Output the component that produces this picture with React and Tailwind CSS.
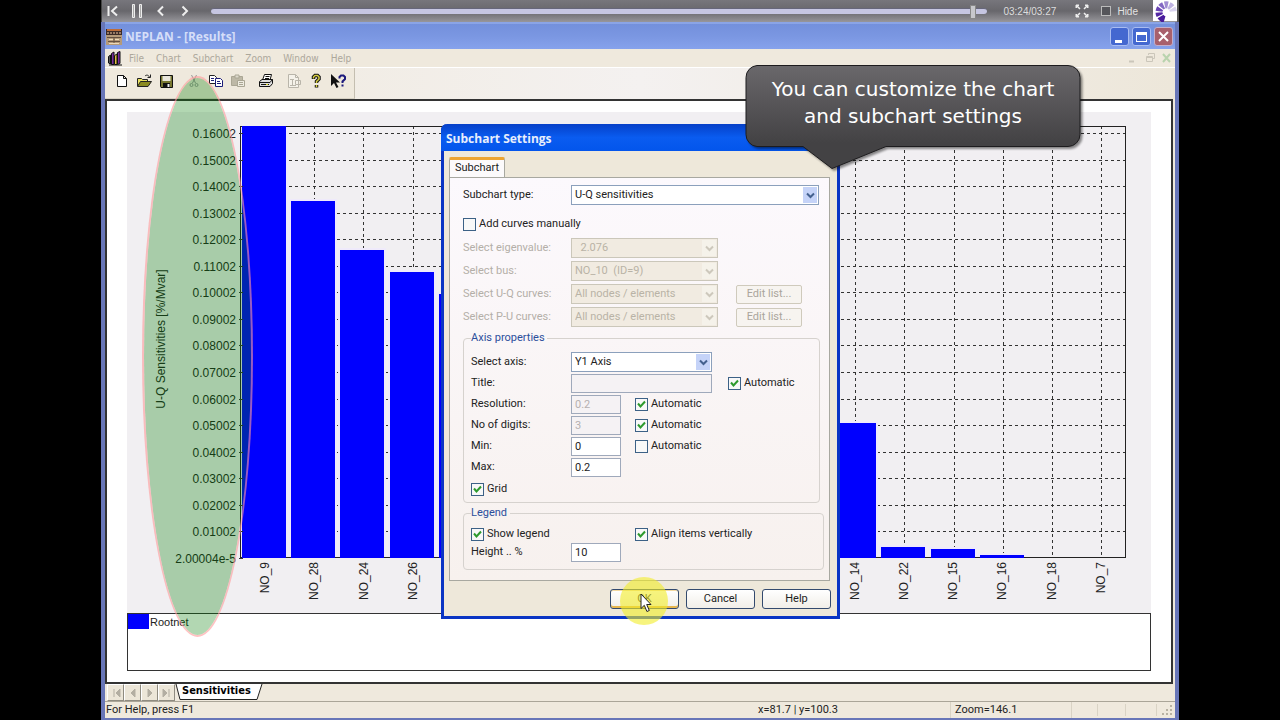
import clsx from 'clsx'

const bars = [
    { left: 115, top: 14 },
    { left: 164, top: 89 },
    { left: 213, top: 138 },
    { left: 263, top: 160 },
    { left: 312, top: 182 },
    { left: 705, top: 311 },
    { left: 754, top: 435 },
    { left: 804, top: 437 },
    { left: 853, top: 443 },
]

const categories = [
    ['NO_9', 138],
    ['NO_28', 187],
    ['NO_24', 237],
    ['NO_26', 286],
    ['NO_14', 728],
    ['NO_22', 777],
    ['NO_15', 826],
    ['NO_16', 875],
    ['NO_18', 925],
    ['NO_7', 974],
]

const yLabels = [
    '0.16002', '0.15002', '0.14002', '0.13002', '0.12002', '0.11002', '0.10002', '0.09002', '0.08002',
    '0.07002', '0.06002', '0.05002', '0.04002', '0.03002', '0.02002', '0.01002', '2.00004e-5',
]

const yPos = (i) => Math.round(21 + i * 26.55) + 0.5
const xPos = (i) => Math.round(138 + i * 49.18) + 0.5

function Chart() {
    return (
        <svg viewBox="0 0 1024 501" className="block w-full bg-[#f1eff2]" fontFamily="Liberation Sans, sans-serif" fontSize="12" fill="#222">
            {yLabels.slice(0, -1).map((label, i) => (
                <line key={label} x1="114" x2="999" y1={yPos(i)} y2={yPos(i)} stroke="#333" strokeDasharray="3 3" />
            ))}
            {Array.from({ length: 18 }, (_, i) => (
                <line key={i} x1={xPos(i)} x2={xPos(i)} y1="14" y2="446" stroke="#333" strokeDasharray="3 3" />
            ))}
            <rect x="113.5" y="14.5" width="885" height="431" fill="none" stroke="#222" />
            {bars.map((bar) => (
                <g key={bar.left}>
                    <rect x={bar.left - 2} y={Math.max(bar.top - 2, 15)} width="48" height={445 - Math.max(bar.top - 2, 15)} fill="#efeafb" />
                    <rect x={bar.left} y={bar.top} width="44" height={446 - bar.top} fill="#0000fe" />
                </g>
            ))}
            <path d="M113.500 14v432" stroke="#222" />
            {yLabels.map((label, i) => (
                <g key={label}>
                    <line x1="112" x2="116" y1={yPos(i)} y2={yPos(i)} stroke="#333" />
                    <text x="109" y={yPos(i) + 4} textAnchor="end">{label}</text>
                </g>
            ))}
            {categories.map(([label, x]) => (
                <text key={label} transform={`translate(${x + 4} 450) rotate(-90)`} textAnchor="end">{label}</text>
            ))}
            <text transform="translate(38 227) rotate(-90)" textAnchor="middle">U-Q Sensitivities [%/Mvar]</text>
        </svg>
    )
}

function PlayerBar() {
    return (
        <div className="flex h-[22px] items-center border-l border-[#444] bg-linear-to-b from-[#77767c] via-[#68676c] to-[#97969b] text-white">
            <div className="flex items-center gap-2 pl-[3px]">
                <button aria-label="Restart" className="flex w-4 justify-center">
                    <svg width="12" height="12" viewBox="0 0 12 12" fill="none" stroke="#eee" strokeWidth="2"><path d="M1.500 1v10M10 1.500 5 6l5 4.500" /></svg>
                </button>
                <button aria-label="Pause" className="flex w-4 justify-center">
                    <svg width="12" height="14" viewBox="0 0 12 14" fill="#aaa" stroke="#eee"><path d="M1.500.500h2v13h-2zM8.500.500h2v13h-2z" /></svg>
                </button>
                <button aria-label="Back" className="flex w-4 justify-center">
                    <svg width="10" height="12" viewBox="0 0 10 12" fill="none" stroke="#eee" strokeWidth="2"><path d="M7 1.500 2.500 6 7 10.500" /></svg>
                </button>
                <button aria-label="Forward" className="flex w-4 justify-center">
                    <svg width="10" height="12" viewBox="0 0 10 12" fill="none" stroke="#eee" strokeWidth="2"><path d="M2.500 1.500 7 6 2.500 10.500" /></svg>
                </button>
            </div>
            <input
                type="range"
                aria-label="Position"
                min="0"
                max="207"
                defaultValue="204"
                className="ml-[18px] h-[6px] min-w-0 flex-1 appearance-none rounded-full border-t border-[#66667a] bg-[#c6c6e2] [&::-webkit-slider-thumb]:h-[14px] [&::-webkit-slider-thumb]:w-[6px] [&::-webkit-slider-thumb]:appearance-none [&::-webkit-slider-thumb]:border [&::-webkit-slider-thumb]:border-[#888] [&::-webkit-slider-thumb]:bg-[#c8c8cc]"
            />
            <span className="ml-4 w-[54px] text-[10px] whitespace-nowrap text-[#ddd]">03:24/03:27</span>
            <button aria-label="Full screen" className="ml-[18px]">
                <svg width="14" height="14" viewBox="0 0 14 14" fill="#eee" stroke="#eee">
                    <path d="M1 1h3L1 4zM13 1v3l-3-3zM1 13v-3l3 3zM13 13h-3l3-3z" />
                    <path d="m2 2 3 3M12 2 9 5M2 12l3-3M12 12 9 9" fill="none" strokeWidth="1.500" />
                </svg>
            </button>
            <label className="ml-3 flex items-center gap-[6px] text-[10px] text-[#e4e4e4]">
                <input type="checkbox" className="size-[10px] appearance-none border border-[#bbb] bg-[#55555a]" />
                Hide
            </label>
            <svg className="ml-[15px]" width="24" height="22" viewBox="0 0 24 22">
                <path d="M0 0h24v21H0z" fill="#fff" />
                <g fill="none" strokeWidth="7">
                    <path d="M11.500 19.500A7 7 0 0 1 7.500 16.500" stroke="#4a1c9c" />
                    <path d="M6.800 15.500a7.500 7.500 0 0 1-.8-3" stroke="#5428a4" />
                    <path d="M6 11.300a7.500 7.500 0 0 1 1.200-3" stroke="#6a44b4" />
                    <path d="M8 7.300a7.500 7.500 0 0 1 2.600-2" stroke="#8468c4" />
                    <path d="M11.700 5a7.500 7.500 0 0 1 3.200 0" stroke="#a08cd2" />
                    <path d="M16 5.400a7.500 7.500 0 0 1 2.600 2" stroke="#beb2e2" />
                    <path d="M19.300 8.400a7.500 7.500 0 0 1 1 3" stroke="#d9d3ee" />
                </g>
            </svg>
            <div className="h-full w-[2px] bg-[#555]" />
        </div>
    )
}

function TitleBar() {
    return (
        <header className="flex h-[27px] items-center border-t-2 border-[#8aa4e6] bg-linear-to-b from-[#7390dc] via-[#7b97e2] to-[#86a2ec] pr-[2px] pl-[1px]">
            <svg width="16" height="16" viewBox="0 0 16 16">
                <path d="M0 0h16v16H0z" fill="#b59a7a" />
                <path d="M0 0h16v6H0z" fill="#3c2a26" />
                <path d="M1 1h14" stroke="#e88440" strokeWidth="1.500" />
                <path d="M1 4h2m1 0h2m1 0h2m1 0h2m1 0h2" stroke="#f0c8a0" />
                <path d="M1 8.500h14M2 12.500h12M8 8v7" stroke="#645040" />
                <path d="M3 10.500h4M9 10.500h4M3 14.500h10" stroke="#ecd9b8" />
            </svg>
            <h1 className="ml-[3px] flex-1 font-['Open_Sans',sans-serif] text-[12px] font-bold text-[#d5def8]">NEPLAN - [Results]</h1>
            <div className="flex gap-[3px]">
                <button aria-label="Minimize" className="flex size-[19px] rounded-[3px] border border-[#a9bdf2] bg-[#4468d0] pt-3 pl-1">
                    <span className="h-[3px] w-[7px] bg-white" />
                </button>
                <button aria-label="Maximize" className="flex size-[19px] items-center justify-center rounded-[3px] border border-[#a9bdf2] bg-[#4468d0]">
                    <span className="h-[10px] w-[11px] border border-t-[3px] border-white" />
                </button>
                <button aria-label="Close" className="flex size-[19px] items-center justify-center rounded-[3px] border border-[#c3aecb] bg-[#a8606c]">
                    <svg width="11" height="11" viewBox="0 0 11 11" stroke="#fff" strokeWidth="2"><path d="m1 1 9 9M10 1 1 10" /></svg>
                </button>
            </div>
        </header>
    )
}

function MenuBar() {
    return (
        <nav className="flex h-[18px] items-center pl-[2px] text-[10px] text-[#aca79b]">
            <svg width="16" height="16" viewBox="0 0 16 16" stroke="#111">
                <path d="M1.500 6.500 3.500 5v9l-2-1z" fill="#555" />
                <path d="M4.500 3.500 7 2v12.500H4.500z" fill="#7a2ea0" />
                <path d="M7.500 5.500 10 4v10.500H7.500z" fill="#e0c040" />
                <path d="M10.500 2.500 13 1.500v12l-2.500 1z" fill="#7a2ea0" />
                <path d="M2 15h13" />
            </svg>
            <div className="ml-[6px] flex flex-1 gap-3">
                <a href="#file">File</a>
                <a href="#chart">Chart</a>
                <a href="#subchart">Subchart</a>
                <a href="#zoom">Zoom</a>
                <a href="#window">Window</a>
                <a href="#help">Help</a>
            </div>
            <svg width="46" height="12" viewBox="0 0 46 12" fill="none" stroke="#cbc6ba" className="mr-[3px]">
                <path d="M3 9.500h5" strokeWidth="2" />
                <path d="M22.500 3V1.500h6v5H27M20.500 4.500h6v5h-6zM20 5.500h7" />
                <path d="m37 2 7 8M44 2l-7 8" stroke="#b9d3ae" strokeWidth="2" />
            </svg>
        </nav>
    )
}

function ToolButton({ label, children }) {
    return (
        <button aria-label={label} className="flex size-[22px] items-center justify-center">
            <svg width="16" height="16" viewBox="0 0 16 16" fill="none">{children}</svg>
        </button>
    )
}

function Toolbar() {
    return (
        <div className="flex h-8 border-t border-white bg-linear-to-r from-[#efe9dc] via-[#f4f1f0] to-[#ede7da]">
            <div className="flex items-center gap-[6px] border-r border-b border-r-[#c4beb0] border-b-[#d8d2c4] bg-[#efe9dd] pr-[5px] pb-1 pl-[6px]">
                <div className="flex">
                    <ToolButton label="New"><path d="M3.500 2.500h6l3 3v8h-9zM9.500 2.500v3h3" fill="#fff" stroke="#111" /></ToolButton>
                    <ToolButton label="Open">
                        <path d="M1.500 13V5.500h4l1 1h5V8" fill="#e8e060" stroke="#222" />
                        <path d="m1.500 13.500 3-5h11l-3.500 5z" fill="#8a8a20" stroke="#222" />
                        <path d="M9 3c1.500-1.500 4-1 4.500 1.500M11.500 4.500h3v-3" stroke="#222" />
                    </ToolButton>
                    <ToolButton label="Save">
                        <path d="M2.500 2.500h12v12H3l-.5-1z" fill="#777730" stroke="#111" />
                        <path d="M4.500 3h8v5h-8z" fill="#e9e6dc" />
                        <path d="M5 10h7v4H5z" fill="#111" /><path d="M9.500 11h2v3h-2z" fill="#eee" />
                    </ToolButton>
                </div>
                <div className="flex">
                    <ToolButton label="Cut"><path d="m5.500 2 4 8M10.500 2l-4 8" stroke="#999" /><circle cx="5.500" cy="12" r="1.500" stroke="#999" /><circle cx="10.500" cy="12" r="1.500" stroke="#999" /></ToolButton>
                    <ToolButton label="Copy">
                        <path d="M1.500 2.500h5l2 2v6h-7z" fill="#fff" stroke="#222" />
                        <path d="M7.500 5.500h5l2 2v6h-7z" fill="#fff" stroke="#1c1c78" />
                        <path d="M3 5.500h3M3 7.500h3M9 8.500h3M9 10.500h4" stroke="#1c1c78" />
                    </ToolButton>
                    <ToolButton label="Paste">
                        <path d="M1.500 3.500h11v9h-11z" fill="#bdb8a6" stroke="#aaa694" />
                        <path d="M5 2h4v3H5z" fill="#ddd9cc" stroke="#aaa694" />
                        <path d="M7.500 7.500h7v6h-7z" fill="#eeebe0" stroke="#aaa694" />
                        <path d="M9 9.500h4M9 11.500h4" stroke="#aaa694" />
                    </ToolButton>
                </div>
                <ToolButton label="Print">
                    <path d="m4.500 7 2-5.500h7L12 7" fill="#fff" stroke="#111" />
                    <path d="M7.500 3.500h4M7 5.500h4" stroke="#111" />
                    <path d="M1.500 8.500 4 6.500h10.500v4l-2.500 3H1.500z" fill="#ddd" stroke="#111" />
                    <path d="M2 9.500h10l2.500-3M3 11.500h8" stroke="#111" /><path d="M8 11.500h2" stroke="#d8d020" />
                </ToolButton>
                <div className="flex">
                    <ToolButton label="Page layout">
                        <path d="M2.500 1.500h7l3 3v10h-10z" fill="#f5f2ea" stroke="#b9b5aa" />
                        <path d="M9.500 1.500v3h3M4 6.500h4M6.500 6v6M4 12.500h6M9.500 7.500h5v4h-5z" stroke="#b9b5aa" />
                    </ToolButton>
                    <ToolButton label="Help">
                        <path d="M5.500 6V4L7 2.500h2.500L11 4v2L8.500 8.500V10M8.500 12v2.500" stroke="#111" strokeWidth="3.500" />
                        <path d="M5.500 5.500V4L7 2.500h2.500L11 4v2L8.500 8.500V10M8.500 12v2" stroke="#d8cf40" strokeWidth="1.500" />
                    </ToolButton>
                    <ToolButton label="Context help">
                        <path d="M1 1v12l3-3 2.500 5 2-1L6 9.500h4z" fill="#111" />
                        <path d="M9.500 5.500V4l1.500-1.500h2.500L15 4v2l-2.500 2.500V10M12.500 11.500v2" stroke="#1d1a7c" strokeWidth="2" />
                    </ToolButton>
                </div>
            </div>
        </div>
    )
}

function SheetTabs() {
    const arrows = ['M4 2v8M10 2 6 6l4 4z', 'M8 2 4 6l4 4z', 'M4 2l4 4-4 4z', 'M8 2v8M2 2l4 4-4 4z']
    const names = ['First sheet', 'Previous sheet', 'Next sheet', 'Last sheet']
    return (
        <div className="flex h-[17px] bg-[#efe9dd] pl-[2px]">
            {arrows.map((d, i) => (
                <button key={d} aria-label={names[i]} className="flex w-[17px] items-center justify-center border border-t-white border-r-[#8f8b80] border-b-[#8f8b80] border-l-white bg-[#ece6d8]">
                    <svg width="12" height="12" viewBox="0 0 12 12" fill="#b3aea2" stroke="#b3aea2"><path d={d} /></svg>
                </button>
            ))}
            <button className="flex h-4 items-center font-['DejaVu_Sans_Condensed',sans-serif] text-[11px] font-bold text-black">
                <svg width="7" height="16" viewBox="0 0 7 16"><path d="M1 0h6v16H5z" fill="#fff" /><path d="m1 0 4 15.500h2" fill="none" stroke="#222" /></svg>
                <span className="flex h-4 items-center border-b border-[#222] bg-white">Sensitivities</span>
                <svg width="12" height="16" viewBox="0 0 12 16"><path d="M0 0h11L6 16H0z" fill="#fff" /><path d="M0 15.500h6L11 0" fill="none" stroke="#222" /></svg>
            </button>
        </div>
    )
}

function StatusBar() {
    return (
        <footer className="flex h-[17px] items-center border-t border-[#aaa598] bg-[#efe9dd] pl-[1px] font-[Roboto,sans-serif] text-[11px] text-[#222] [&>span]:border-r [&>span]:border-[#d9d3c5]">
            <p className="flex-1">For Help, press F1</p>
            <span className="w-[193px]">x=81.7 | y=100.3</span>
            <span className="w-[121px] pl-[4px]">Zoom=146.1</span>
            <span className="h-3 w-[26px]" />
            <span className="h-3 w-[28px]" />
            <span className="h-3 w-[31px]" />
            <svg width="18" height="14" viewBox="0 0 18 14" fill="#b8b2a3"><path d="M13 2h2v2h-2zM9 6h2v2H9zM13 6h2v2h-2zM5 10h2v2H5zM9 10h2v2H9zM13 10h2v2h-2z" /></svg>
        </footer>
    )
}

function Check({ label, checked = false }) {
    return (
        <label className="flex h-[14px] items-center gap-[3px] whitespace-nowrap">
            <span className="grid">
                <input type="checkbox" defaultChecked={checked} className="peer col-start-1 row-start-1 size-[13px] appearance-none border border-[#3c6186] bg-[#f8f8f8]" />
                <svg className="pointer-events-none invisible col-start-1 row-start-1 peer-checked:visible" width="13" height="13" viewBox="0 0 13 13" fill="none" stroke="#2d9a2d" strokeWidth="2">
                    <path d="m3 5.500 2.500 3 4.500-5" />
                </svg>
            </span>
            {label}
        </label>
    )
}

function Dropdown({ id, value, width, disabled }) {
    return (
        <span className={clsx('grid', width)}>
            <select
                id={id}
                disabled={disabled}
                className={clsx(
                    'col-start-1 row-start-1 h-[20px] w-full appearance-none border pl-[3px]',
                    disabled ? 'border-[#cbc7ba] bg-[#f1ebe1] text-[#b9b3a6] opacity-100' : 'border-[#8ba0bc] bg-white text-[#222]'
                )}
            >
                <option>{value}</option>
            </select>
            <span className={clsx('pointer-events-none col-start-1 row-start-1 my-[2px] mr-[2px] flex w-[14px] items-center justify-center self-stretch justify-self-end', disabled ? 'bg-[#f5f2ea]' : 'bg-[#c5d3f8]')}>
                <svg width="9" height="7" viewBox="0 0 9 7" fill="none" stroke={disabled ? '#cdc8bc' : '#44618f'} strokeWidth="2"><path d="m1 1.500 3.500 3.500L8 1.500" /></svg>
            </span>
        </span>
    )
}

function TextField({ id, value, wide, disabled }) {
    return (
        <input
            id={id}
            type="text"
            defaultValue={value}
            disabled={disabled}
            className={clsx('h-[19px] border border-[#9fa9bb] px-[3px]', wide ? 'w-[141px]' : 'w-[50px]', disabled ? 'bg-[#f5f2f4] text-[#b5b0b0]' : 'bg-white text-[#222]')}
        />
    )
}

function Row({ id, label, inner, muted, children }) {
    return (
        <div className="flex items-center">
            <label htmlFor={id} className={clsx(inner ? 'w-[100px]' : 'w-[108px]', muted && 'text-[#b4afa8]')}>{label}</label>
            {children}
        </div>
    )
}

function DialogButton({ children, primary }) {
    return (
        <button className={clsx('h-[20px] w-[69px] rounded-[3px] border bg-linear-to-b from-white to-[#f1eee8]', primary ? 'border-[#334a6e] shadow-[inset_0_-2px_0_#e6b64e,inset_0_1px_0_#f3d9a0]' : 'border-[#334a6e]')}>
            {children}
        </button>
    )
}

function SettingsDialog() {
    return (
        <section role="dialog" aria-label="Subchart Settings" className="absolute top-[124px] left-[441px] w-[399px] rounded-t-[6px] border-[3px] border-t-0 border-[#0a35c4] bg-[#eee8da] font-[Roboto,sans-serif] text-[11px] text-[#222]">
            <h2 className="-mx-[3px] flex h-[27px] items-center rounded-t-[6px] bg-linear-to-b from-[#0640c8] via-[#0a5cf0] to-[#0355ec] pt-[3px] pl-[5px] font-['Open_Sans',sans-serif] text-[12px] font-bold text-[#e8eefc]">Subchart Settings</h2>
            <div className="px-[5px] pt-[6px] pb-[7px]">
                <button className="flex h-[20px] w-[56px] items-center justify-center rounded-t-[2px] border border-t-[3px] border-b-0 border-[#a8a8a0] border-t-[#eda532] bg-[#fcfafb]">Subchart</button>
                <div className="mr-[2px] h-[404px] border border-[#a8a8a0] bg-linear-to-b from-[#fcf9fd] to-[#f7f1ee] pt-[7px] pr-[5px] pl-[13px]">
                    <Row id="type" label="Subchart type:"><Dropdown id="type" value="U-Q sensitivities" width="w-[248px]" /></Row>
                    <div className="mt-3 mb-[7px]"><Check label="Add curves manually" /></div>
                    <div className="flex flex-col gap-[3px]">
                        <Row id="eigen" label="Select eigenvalue:" muted><Dropdown id="eigen" value="&nbsp; 2.076" width="w-[147px]" disabled /></Row>
                        <Row id="bus" label="Select bus:" muted><Dropdown id="bus" value="NO_10&nbsp; (ID=9)" width="w-[147px]" disabled /></Row>
                        <Row id="uq" label="Select U-Q curves:" muted>
                            <Dropdown id="uq" value="All nodes / elements" width="w-[147px]" disabled />
                            <button disabled className="ml-[18px] h-[19px] w-[66px] rounded-[2px] border border-[#cfcabc] bg-[#f7f4f0] text-[#aaa59c]">Edit list...</button>
                        </Row>
                        <Row id="pu" label="Select P-U curves:" muted>
                            <Dropdown id="pu" value="All nodes / elements" width="w-[147px]" disabled />
                            <button disabled className="ml-[18px] h-[19px] w-[66px] rounded-[2px] border border-[#cfcabc] bg-[#f7f4f0] text-[#aaa59c]">Edit list...</button>
                        </Row>
                    </div>
                    <fieldset className="mt-1 mr-[4px] rounded-[4px] border border-[#d6d2ce] px-[7px] pt-[7px] pb-[6px]">
                        <legend className="h-[14px] leading-[14px] text-[#2c4f9c]">Axis properties&nbsp;</legend>
                        <div className="flex flex-col gap-[2px]">
                            <Row id="axis" label="Select axis:" inner><Dropdown id="axis" value="Y1 Axis" width="w-[141px]" /></Row>
                            <Row id="title" label="Title:" inner>
                                <TextField id="title" wide disabled />
                                <div className="ml-4"><Check label="Automatic" checked /></div>
                            </Row>
                            <Row id="resolution" label="Resolution:" inner>
                                <TextField id="resolution" value="0.2" disabled />
                                <div className="ml-[14px]"><Check label="Automatic" checked /></div>
                            </Row>
                            <Row id="digits" label="No of digits:" inner>
                                <TextField id="digits" value="3" disabled />
                                <div className="ml-[14px]"><Check label="Automatic" checked /></div>
                            </Row>
                            <Row id="min" label="Min:" inner>
                                <TextField id="min" value="0" />
                                <div className="ml-[14px]"><Check label="Automatic" /></div>
                            </Row>
                            <Row id="max" label="Max:" inner><TextField id="max" value="0.2" /></Row>
                        </div>
                        <div className="mt-[5px]"><Check label="Grid" checked /></div>
                    </fieldset>
                    <fieldset className="mt-[3px] rounded-[4px] border border-[#d6d2ce] px-[7px] pt-[7px] pb-[7px]">
                        <legend className="h-[14px] leading-[14px] text-[#2c4f9c]">Legend&nbsp;</legend>
                        <div className="mb-[2px] flex">
                            <div className="w-[164px]"><Check label="Show legend" checked /></div>
                            <Check label="Align items vertically" checked />
                        </div>
                        <Row id="height" label="Height .. %" inner><TextField id="height" value="10" /></Row>
                    </fieldset>
                </div>
                <div className="mt-[8px] mr-[1px] flex justify-end gap-[7px]">
                    <div className="relative">
                        <DialogButton primary>OK</DialogButton>
                        <div className="pointer-events-none absolute -top-[12px] left-[10px] size-[48px] rounded-full bg-[#f2ec28]/60" />
                        <svg className="pointer-events-none absolute top-[4px] left-[30px]" width="12" height="20" viewBox="0 0 12 20">
                            <path d="M1 1v14.500l3.300-3.200 2.600 6.200 2.400-1-2.600-6H11z" fill="#fff" stroke="#222" />
                        </svg>
                    </div>
                    <DialogButton>Cancel</DialogButton>
                    <DialogButton>Help</DialogButton>
                </div>
            </div>
        </section>
    )
}

function Callout() {
    return (
        <div className="absolute top-[65px] left-[745px] h-[108px] w-[340px]">
            <svg className="absolute inset-0 drop-shadow-[2px_2px_1px_rgba(0,0,0,0.45)]" width="340" height="108" viewBox="0 0 340 108">
                <defs>
                    <linearGradient id="callout-fill" x1="0" y1="0" x2="0" y2="1">
                        <stop offset="0" stopColor="#6a686b" />
                        <stop offset="0.750" stopColor="#434244" />
                    </linearGradient>
                </defs>
                <path d="M12 .5h311a12 12 0 0 1 12 12v57a12 12 0 0 1-12 12H141L87 103.500 58 81.500H12a12 12 0 0 1-11-12v-57a12 12 0 0 1 11-12z" fill="url(#callout-fill)" stroke="#1d1c1e" />
            </svg>
            <p className="relative pt-[11px] pr-1 text-center font-['DejaVu_Sans',sans-serif] text-[20px] leading-[27px] text-white">
                You can customize the chart
                <br />
                and subchart settings
            </p>
        </div>
    )
}

export default function App() {
    return (
        <div className="relative flex min-h-screen flex-col bg-black px-[101px] font-['Liberation_Sans',Arial,sans-serif]">
            <PlayerBar />
            <div className="flex flex-1 flex-col border-x-[4px] border-b-2 border-[#6876b8] bg-[#efe9dd] font-['DejaVu_Sans_Condensed',sans-serif]">
                <TitleBar />
                <MenuBar />
                <Toolbar />
                <main className="mr-[2px] flex-1 border-2 border-[#333] bg-white px-5 pt-[11px]">
                    <Chart />
                    <div className="flex h-[58px] items-start border border-[#333] font-['Liberation_Sans',Arial,sans-serif] text-[11px]">
                        <span className="h-[15px] w-[21px] bg-[#0000fe]" />
                        <span className="pl-[1px] leading-[16px] text-[#222]">Rootnet</span>
                    </div>
                </main>
                <SheetTabs />
                <StatusBar />
            </div>
            <div className="pointer-events-none absolute top-[76px] left-[142px] h-[561px] w-[111px] rounded-[50%] border-2 border-[#ff9a9a]/60 bg-[#007b00]/30 bg-clip-padding" />
            <SettingsDialog />
            <Callout />
        </div>
    )
}
